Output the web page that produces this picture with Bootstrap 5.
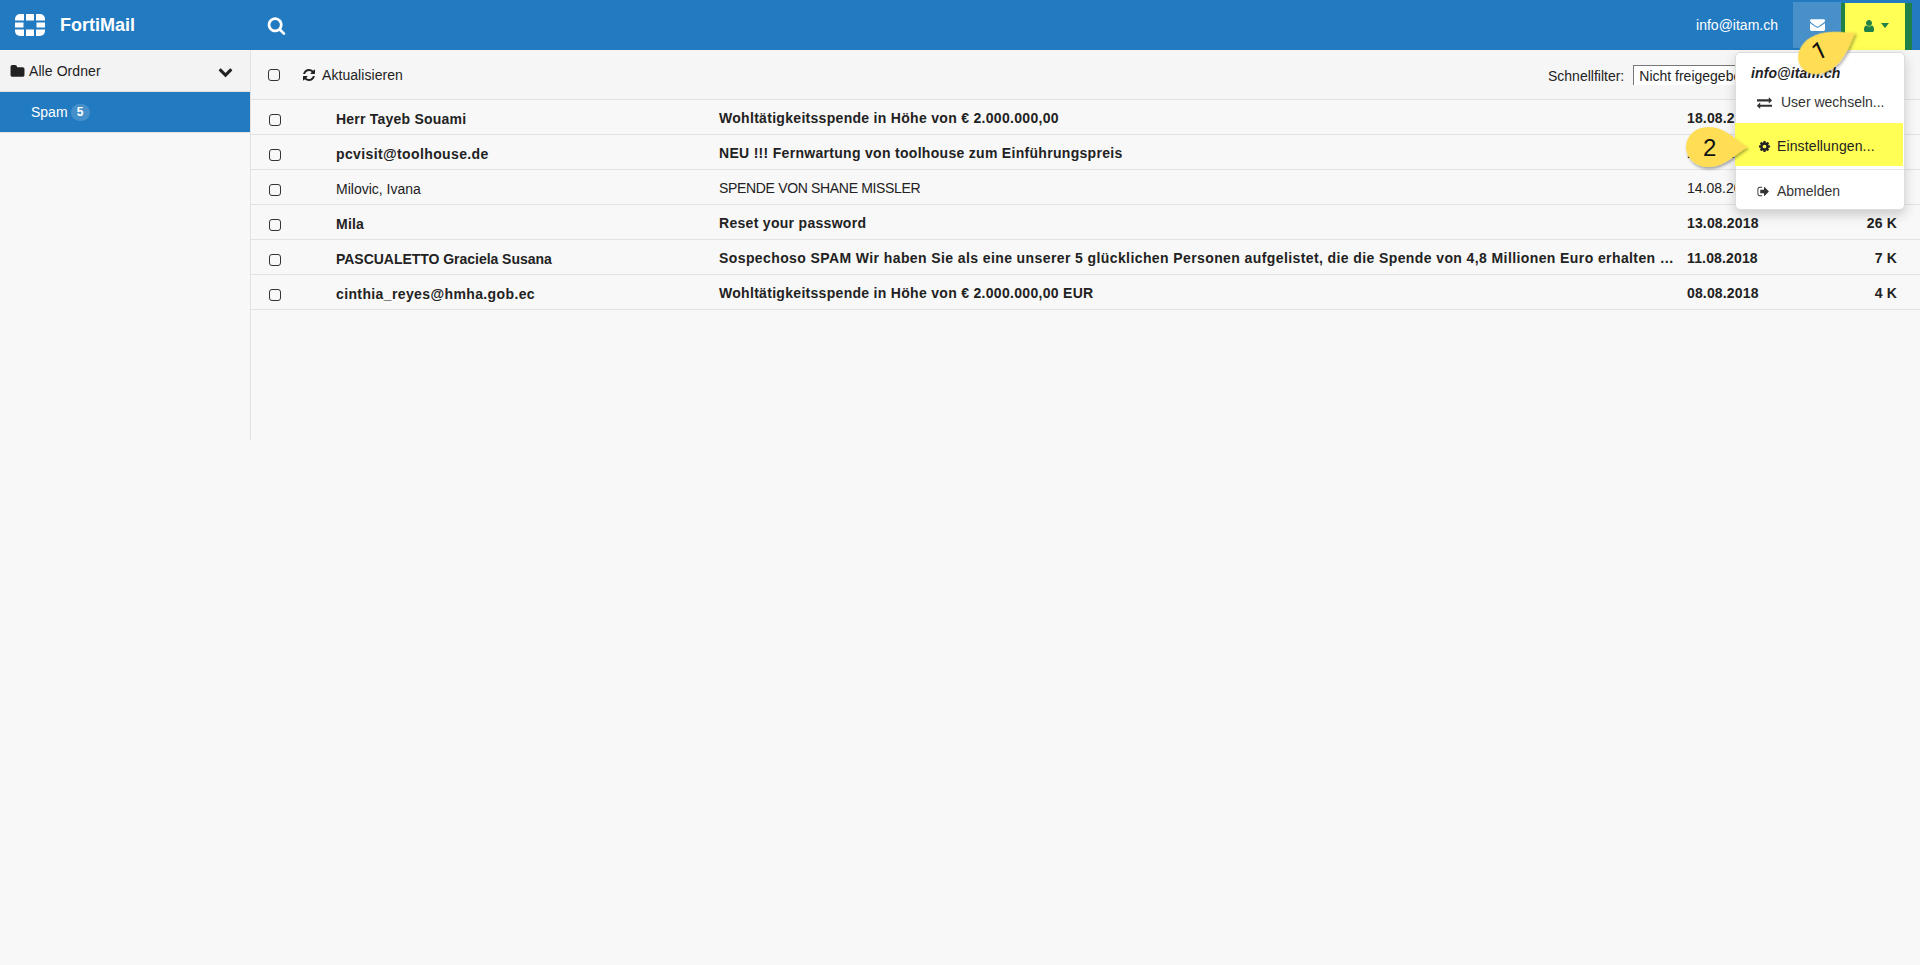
<!DOCTYPE html>
<html lang="de">
<head>
<meta charset="utf-8">
<title>FortiMail</title>
<link rel="stylesheet" href="https://cdn.jsdelivr.net/npm/bootstrap@5.3.0/dist/css/bootstrap.min.css">
<style>
html,body{height:100%}
body{background:#f8f8f8;font-family:"Liberation Sans",Arial,sans-serif;font-size:14px;color:#222;overflow:hidden}
.fm-ic{fill:currentColor;display:inline-block;flex:none}
.fm-top{height:50px;background:#227bc1;color:#fff;padding:0}
.fm-brand{width:250px;gap:15px;padding-left:15px;font-size:18px;font-weight:700;color:#fff}
.fm-search{margin-left:17px}
.fm-mail-addr{margin-right:15px;font-size:14px}
.fm-mail-btn{width:48px;height:46px;margin-top:2px;padding-bottom:2px;background:#4790c9;color:#fff}
.fm-user-wrap{margin-top:3px;height:47px;background:#1f8048;padding:0 7px 0 4px;margin-right:8px}
.fm-user-btn{width:60px;height:47px;padding-bottom:2px;background:#ffff55;color:#1f8048;gap:5px}
.fm-caret{width:0;height:0;border-left:4.5px solid transparent;border-right:4.5px solid transparent;border-top:5px solid #1f8048}
.fm-side{width:250px;flex:none}
.fm-side-head{height:41px;background:#f3f3f3;border-bottom:1px solid #e2e2e2;padding:0 17px 0 10px;margin-top:1px;letter-spacing:.08px}
.fm-side-item{height:41px;background:#227bc1;color:#fff;border-bottom:1px solid #e2e2e2;padding-left:31px;gap:3px;font-size:14px}
.fm-count{background:rgba(255,255,255,.16);border-radius:9px;width:19px;height:17px;font-size:12px;font-weight:700;line-height:17px;text-align:center;color:#fff}
.fm-main{width:1670px;height:390px;border-left:1px solid #e2e2e2}
.fm-tools{height:50px;background:#f6f6f6;border-bottom:1px solid #e2e2e2;border-top-left-radius:4px;padding-left:17px}
.fm-chk{appearance:none;width:12px;height:12px;border:1.4px solid #333;border-radius:3px;background:transparent;margin:0;flex:none}
.fm-refresh{margin-left:22px;gap:6px;padding-top:1px;letter-spacing:.06px}
.fm-filter{position:absolute;left:1548px;top:65px;gap:9px}
.fm-filter>span{padding-top:1px}
.fm-select{width:240px;height:20px;background:#fff;border-top:1px solid #777;border-left:1px solid #777;padding-left:5px;line-height:21px;white-space:nowrap;overflow:hidden}
.fm-row{height:35px;border-bottom:1px solid #e2e2e2;padding-left:18px}
.fm-row .fm-chk{margin-top:5px}
.fm-c-from{width:383px;margin-left:55px;padding-top:5px;flex:none}
.fm-c-subj{width:968px;padding-right:5px;padding-top:2px;flex:none;white-space:nowrap;overflow:hidden}
.fm-c-date{width:160px;padding-top:2px;flex:none}
.fm-c-size{width:50px;padding-top:2px;text-align:right;flex:none}
.fm-unread{font-weight:700;letter-spacing:.15px}
.fm-unread .fm-c-subj{letter-spacing:.3px}
.fm-unread .fm-subj-long{letter-spacing:.4px}
.fm-unread .fm-from-std{letter-spacing:.22px}
.fm-unread .fm-from-wide{letter-spacing:.38px}
.fm-unread .fm-from-caps{letter-spacing:-.03px}
.fm-plain-subj{letter-spacing:-.33px;padding-top:3px}
.fm-menu{display:block;left:1735px;top:52px;width:170px;height:158px;padding:0;border:1px solid #ddd;border-radius:5px;box-shadow:0 5px 12px rgba(0,0,0,.18);font-size:14px;color:#333}
.fm-menu-head{font-weight:700;font-style:italic;padding:12px 0 0 15px;height:30px;line-height:16px;color:#222;letter-spacing:.1px}
.fm-menu-item{height:37px;padding:1px 0 0 21px;gap:9px;color:#333}
.fm-menu-sep{height:1px;margin:3px 0;background:#e5e5e5}
.fm-menu-hl{height:43px;background:#ffff55;margin:3px 1px 0 -1px;padding:4px 0 0 23px;gap:6px;color:#222;letter-spacing:.12px}
.fm-menu-last{height:37px;padding:0 0 0 21px;gap:7px}
.fm-callouts{left:0;top:0;width:1920px;height:240px;pointer-events:none;z-index:1100}
.fm-num{font-family:"Liberation Sans",Arial,sans-serif;font-size:24px;fill:#111}
.fm-num-one{font-family:Roboto,"Liberation Sans",sans-serif}
</style>
</head>
<body>
<svg width="0" height="0" class="position-absolute">
<defs>
<symbol id="i-search" viewBox="0 0 1792 1792"><path d="M1216 832q0-185-131.500-316.500t-316.500-131.500-316.500 131.500-131.500 316.500 131.500 316.500 316.500 131.500 316.500-131.500 131.500-316.500zm512 832q0 52-38 90t-90 38q-54 0-90-38l-343-342q-179 124-399 124-143 0-273.500-55.500t-225-150-150-225-55.500-273.500 55.500-273.500 150-225 225-150 273.500-55.500 273.500 55.500 225 150 150 225 55.500 273.500q0 220-124 399l343 343q37 37 37 90z"/></symbol>
<symbol id="i-folder" viewBox="0 0 1792 1792"><path d="M1728 608v704q0 92-66 158t-158 66h-1216q-92 0-158-66t-66-158v-960q0-92 66-158t158-66h320q92 0 158 66t66 158v32h672q92 0 158 66t66 158z"/></symbol>
<symbol id="i-chev" viewBox="0 0 1792 1792"><path d="M1683 808l-742 741q-19 19-45 19t-45-19l-742-741q-19-19-19-45.500t19-45.500l166-165q19-19 45-19t45 19l531 531 531-531q19-19 45-19t45 19l166 165q19 19 19 45.500t-19 45.500z"/></symbol>
<symbol id="i-refresh" viewBox="0 0 1792 1792"><path d="M1639 1056q0 5-1 7-64 268-268 434.500t-478 166.500q-146 0-282.500-55t-243.500-157l-129 129q-19 19-45 19t-45-19-19-45v-448q0-26 19-45t45-19h448q26 0 45 19t19 45-19 45l-137 137q71 66 161 102t187 36q134 0 250-65t186-179q11-17 53-117 8-23 30-23h192q13 0 22.500 9.500t9.500 22.500zm25-800v448q0 26-19 45t-45 19h-448q-26 0-45-19t-19-45 19-45l138-138q-148-137-349-137-134 0-250 65t-186 179q-11 17-53 117-8 23-30 23h-199q-13 0-22.500-9.500t-9.500-22.500v-7q65-268 270-434.500t480-166.500q146 0 284 55.500t245 156.500l130-129q19-19 45-19t45 19 19 45z"/></symbol>
<symbol id="i-mail" viewBox="0 0 1792 1792"><path d="M1792 710v794q0 66-47 113t-113 47h-1472q-66 0-113-47t-47-113v-794q44 49 101 87 362 246 497 345 57 42 92.500 65.500t94.500 48 110 24.500h2q51 0 110-24.500t94.500-48 92.500-65.500q170-123 498-345 57-39 100-87zm0-294q0 79-49 151t-122 123q-376 261-468 325-10 7-42.500 30.500t-54 38-52 32.500-57.500 27-50 9h-2q-23 0-50-9t-57.500-27-52-32.500-54-38-42.500-30.500q-91-64-262-182.500t-205-142.500q-62-42-117-115.500t-55-136.500q0-78 41.500-130t118.500-52h1472q65 0 112.500 47t47.500 113z"/></symbol>
<symbol id="i-user" viewBox="0 0 1792 1792"><path d="M1536 1399q0 109-62.500 187t-150.500 78h-854q-88 0-150.500-78t-62.500-187q0-85 8.500-160.500t31.500-152 58.500-131 94-89 134.500-34.500q131 128 313 128t313-128q76 0 134.500 34.500t94 89 58.500 131 31.500 152 8.500 160.500zm-256-887q0 159-112.500 271.500t-271.500 112.500-271.500-112.500-112.500-271.500 112.500-271.500 271.500-112.500 271.500 112.500 112.500 271.500z"/></symbol>
<symbol id="i-swap" viewBox="0 0 1792 1792"><path d="M1792 1184v192q0 13-9.500 22.500t-22.500 9.500h-1376v192q0 13-9.500 22.500t-22.500 9.500q-12 0-24-10l-319-320q-9-9-9-22 0-14 9-23l320-320q9-9 23-9 13 0 22.500 9.500t9.500 22.500v192h1376q13 0 22.500 9.500t9.500 22.500zm0-544q0 14-9 23l-320 320q-9 9-23 9-13 0-22.500-9.500t-9.500-22.500v-192h-1376q-13 0-22.500-9.500t-9.500-22.500v-192q0-13 9.500-22.500t22.500-9.500h1376v-192q0-14 9-23t23-9q12 0 24 10l319 319q9 9 9 23z"/></symbol>
<symbol id="i-cog" viewBox="0 0 1792 1792"><path d="M1152 896q0-106-75-181t-181-75-181 75-75 181 75 181 181 75 181-75 75-181zm512-109v222q0 12-8 23t-20 13l-185 28q-19 54-39 91 35 50 107 138 10 12 10 25t-9 23q-27 37-99 108t-94 71q-12 0-26-9l-138-108q-44 23-91 38-16 136-29 186-7 28-36 28h-222q-14 0-24.500-8.500t-11.500-21.500l-28-184q-49-16-90-37l-141 107q-10 9-25 9-14 0-25-11-126-114-165-168-7-10-7-23 0-12 8-23 15-21 51-66.500t54-70.500q-27-50-41-99l-183-27q-13-2-21-12.500t-8-23.500v-222q0-12 8-23t19-13l186-28q14-46 39-92-40-57-107-138-10-12-10-24 0-10 9-23 26-36 98.500-107.500t94.500-71.500q13 0 26 10l138 107q44-23 91-38 16-136 29-186 7-28 36-28h222q14 0 24.500 8.500t11.500 21.500l28 184q49 16 90 37l142-107q9-9 24-9 13 0 25 10 129 119 165 170 7 8 7 22 0 12-8 23-15 21-51 66.500t-54 70.500q26 50 41 98l183 28q13 2 21 12.500t8 23.500z"/></symbol>
<symbol id="i-out" viewBox="0 0 1792 1792"><path d="M704 1440q0 4 1 20t.5 26.500-3 23.500-10 19.500-20.500 6.500h-320q-119 0-203.500-84.500t-84.500-203.500v-704q0-119 84.500-203.500t203.500-84.500h320q13 0 22.500 9.500t9.500 22.500q0 4 1 20t.5 26.500-3 23.500-10 19.500-20.500 6.500h-320q-66 0-113 47t-47 113v704q0 66 47 113t113 47h312l11.500 1 11.500 3 8 5.500 7 9 2 13.500zm928-544q0 26-19 45l-544 544q-19 19-45 19t-45-19-19-45v-288h-448q-26 0-45-19t-19-45v-384q0-26 19-45t45-19h448v-288q0-26 19-45t45-19 45 19l544 544q19 19 19 45z"/></symbol>
<filter id="fm-shadow" x="-30%" y="-30%" width="160%" height="160%"><feDropShadow dx="1" dy="2" stdDeviation="1.5" flood-color="#000" flood-opacity=".35"/></filter>
</defs>
</svg>

<nav class="navbar fm-top flex-nowrap align-items-start">
  <div class="fm-brand d-flex align-items-center h-100">
    <svg width="30" height="22" viewBox="0 0 30 22" class="fm-ic">
      <path d="M0 6.500V5A5 5 0 0 1 5 0H9V6.500Z"/><rect x="11" width="8" height="6.500"/><path d="M21 0H25A5 5 0 0 1 30 5V6.500H21Z"/>
      <rect y="8.500" width="8.500" height="5"/><rect x="21.500" y="8.500" width="8.500" height="5"/>
      <path d="M0 15.500H9V22H5A5 5 0 0 1 0 17Z"/><rect x="11" y="15.500" width="8" height="6.500"/><path d="M21 15.500H30V17A5 5 0 0 1 25 22H21Z"/>
    </svg>
    <span>FortiMail</span>
  </div>
  <div class="fm-search d-flex align-items-center h-100"><svg width="19" height="19" class="fm-ic"><use href="#i-search"/></svg></div>
  <div class="ms-auto d-flex align-items-start h-100">
    <span class="fm-mail-addr align-self-center">info@itam.ch</span>
    <div class="fm-mail-btn d-flex align-items-center justify-content-center"><svg width="15" height="15" class="fm-ic"><use href="#i-mail"/></svg></div>
    <div class="fm-user-wrap">
      <div class="fm-user-btn d-flex align-items-center justify-content-center"><svg width="14" height="14" class="fm-ic"><use href="#i-user"/></svg><span class="fm-caret"></span></div>
    </div>
  </div>
</nav>

<div class="d-flex">
  <aside class="fm-side">
    <div class="fm-side-head d-flex align-items-center justify-content-between">
      <span class="d-flex align-items-center gap-1"><svg width="15" height="15" class="fm-ic"><use href="#i-folder"/></svg><span>Alle Ordner</span></span>
      <svg width="15" height="15" class="fm-ic"><use href="#i-chev"/></svg>
    </div>
    <div class="fm-side-item d-flex align-items-center"><span>Spam</span><span class="fm-count">5</span></div>
  </aside>
  <main class="fm-main">
    <div class="fm-tools d-flex align-items-center">
      <input type="checkbox" class="fm-chk" aria-label="Alle">
      <span class="fm-refresh d-flex align-items-center"><svg width="14" height="14" class="fm-ic"><use href="#i-refresh"/></svg><span>Aktualisieren</span></span>
    </div>
    <div class="fm-row d-flex align-items-center fm-unread"><input type="checkbox" class="fm-chk" aria-label="Auswahl"><span class="fm-c-from fm-from-std">Herr Tayeb Souami</span><span class="fm-c-subj">Wohltätigkeitsspende in Höhe von € 2.000.000,00</span><span class="fm-c-date">18.08.2018</span><span class="fm-c-size">6 K</span></div>
    <div class="fm-row d-flex align-items-center fm-unread"><input type="checkbox" class="fm-chk" aria-label="Auswahl"><span class="fm-c-from fm-from-wide">pcvisit@toolhouse.de</span><span class="fm-c-subj">NEU !!! Fernwartung von toolhouse zum Einführungspreis</span><span class="fm-c-date">16.08.2018</span><span class="fm-c-size">9 K</span></div>
    <div class="fm-row d-flex align-items-center"><input type="checkbox" class="fm-chk" aria-label="Auswahl"><span class="fm-c-from">Milovic, Ivana</span><span class="fm-c-subj fm-plain-subj">SPENDE VON SHANE MISSLER</span><span class="fm-c-date">14.08.2018</span><span class="fm-c-size">5 K</span></div>
    <div class="fm-row d-flex align-items-center fm-unread"><input type="checkbox" class="fm-chk" aria-label="Auswahl"><span class="fm-c-from fm-from-std">Mila</span><span class="fm-c-subj">Reset your password</span><span class="fm-c-date">13.08.2018</span><span class="fm-c-size">26 K</span></div>
    <div class="fm-row d-flex align-items-center fm-unread"><input type="checkbox" class="fm-chk" aria-label="Auswahl"><span class="fm-c-from fm-from-caps">PASCUALETTO Graciela Susana</span><span class="fm-c-subj fm-subj-long">Sospechoso SPAM Wir haben Sie als eine unserer 5 glücklichen Personen aufgelistet, die die Spende von 4,8 Millionen Euro erhalten …</span><span class="fm-c-date">11.08.2018</span><span class="fm-c-size">7 K</span></div>
    <div class="fm-row d-flex align-items-center fm-unread"><input type="checkbox" class="fm-chk" aria-label="Auswahl"><span class="fm-c-from fm-from-wide">cinthia_reyes@hmha.gob.ec</span><span class="fm-c-subj">Wohltätigkeitsspende in Höhe von € 2.000.000,00 EUR</span><span class="fm-c-date">08.08.2018</span><span class="fm-c-size">4 K</span></div>
  </main>
</div>

<div class="fm-filter d-flex align-items-start"><span>Schnellfilter:</span><div class="fm-select">Nicht freigegeben</div></div>

<div class="dropdown-menu fm-menu position-absolute">
  <div class="fm-menu-head">info@itam.ch</div>
  <div class="fm-menu-item d-flex align-items-center"><svg width="15" height="15" class="fm-ic"><use href="#i-swap"/></svg><span>User wechseln...</span></div>
  <div class="fm-menu-hl d-flex align-items-center"><svg width="13" height="13" class="fm-ic"><use href="#i-cog"/></svg><span>Einstellungen...</span></div>
  <div class="fm-menu-sep"></div>
  <div class="fm-menu-last d-flex align-items-center"><svg width="13" height="13" class="fm-ic"><use href="#i-out"/></svg><span>Abmelden</span></div>
</div>

<svg class="fm-callouts position-absolute" viewBox="0 0 1920 240">
  <g transform="translate(1820 54) rotate(-31)">
    <path d="M41 0C29-8 17-19 0-19A23 19 0 1 0 0 19C17 19 29 8 41 0Z" fill="#ffdd55" filter="url(#fm-shadow)"/>
    <text class="fm-num fm-num-one" x="-6" y="5" transform="rotate(6)">1</text>
  </g>
  <g transform="translate(1708 147)">
    <path d="M40 0C28-6 18-20 0-20A22 20 0 1 0 0 20C18 20 28 6 40 0Z" fill="#ffdd55" filter="url(#fm-shadow)"/>
    <text class="fm-num" x="-5" y="9">2</text>
  </g>
</svg>
<script src="https://cdn.jsdelivr.net/npm/bootstrap@5.3.0/dist/js/bootstrap.bundle.min.js"></script>
</body>
</html>
